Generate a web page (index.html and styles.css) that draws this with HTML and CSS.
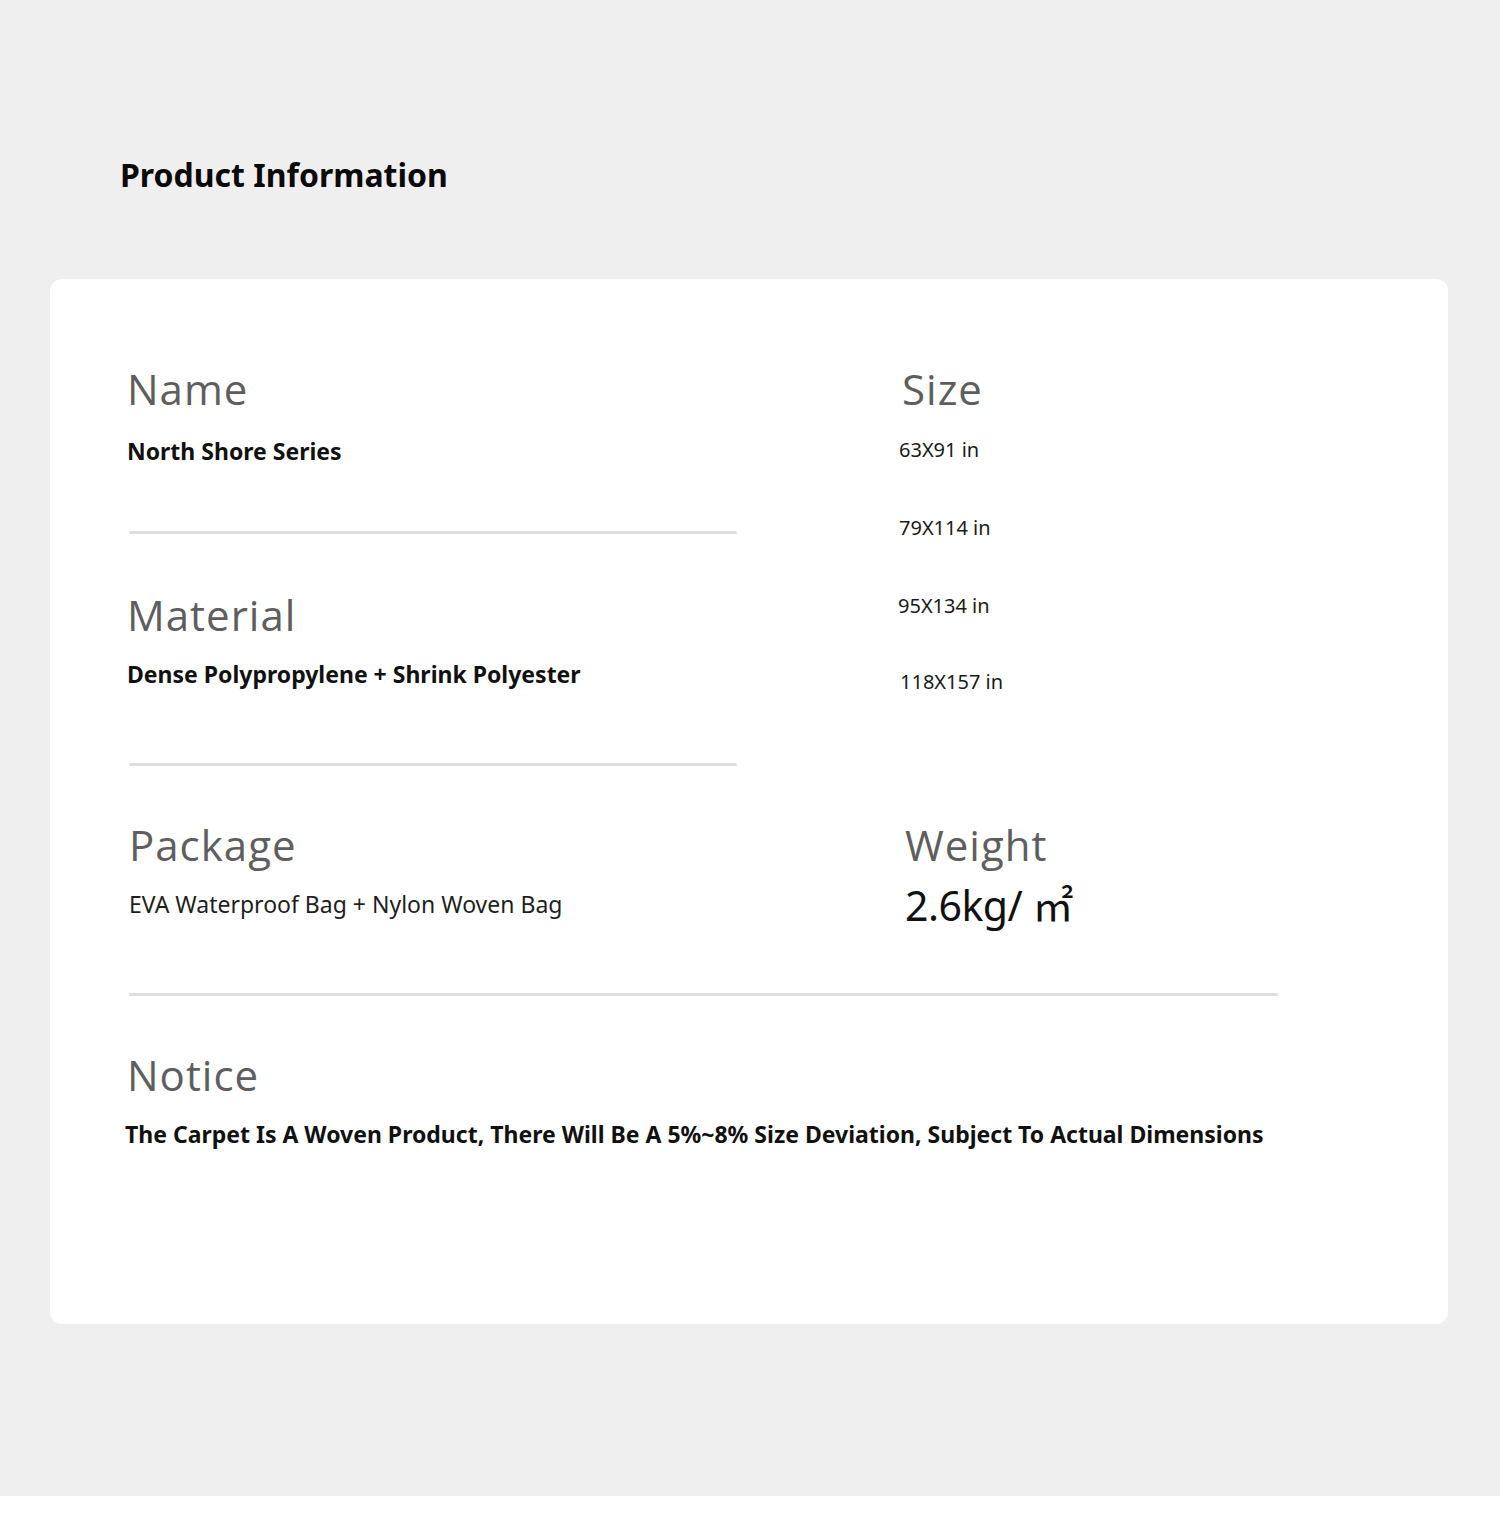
FILE: index.html
```html
<!DOCTYPE html>
<html lang="en">
<head>
<meta charset="utf-8">
<title>Product Information</title>
<link rel="stylesheet" href="styles.css">
</head>
<body>
<div class="page">
  <h1 class="title">Product Information</h1>
  <section class="card">
    <div class="grid">
      <div class="col-left">
        <div class="field">
          <div class="label">Name</div>
          <div class="value bold">North Shore Series</div>
        </div>
        <div class="divider d1"></div>
        <div class="field f-material">
          <div class="label">Material</div>
          <div class="value bold v-material">Dense Polypropylene + Shrink Polyester</div>
        </div>
        <div class="divider d2"></div>
      </div>
      <div class="col-right">
        <div class="label label-size">Size</div>
        <ul class="sizes">
          <li>63X91 in</li>
          <li>79X114 in</li>
          <li class="s3">95X134 in</li>
          <li class="s4">118X157 in</li>
        </ul>
      </div>
      <div class="field f-package">
        <div class="label label-package">Package</div>
        <div class="value regular v-package">EVA Waterproof Bag + Nylon Woven Bag</div>
      </div>
      <div class="field f-weight">
        <div class="label">Weight</div>
        <div class="weight">2.6kg/ ㎡</div>
      </div>
    </div>
    <div class="divider d3"></div>
    <div class="field f-notice">
      <div class="label">Notice</div>
      <div class="value bold v-notice">The Carpet Is A Woven Product, There Will Be A 5%~8% Size Deviation, Subject To Actual Dimensions</div>
    </div>
  </section>
</div>
<div class="bottom-band"></div>
</body>
</html>
```

FILE: styles.css
```css
* { box-sizing: border-box; }
html, body { margin: 0; padding: 0; }
body {
  background: #efefef;
  font-family: "Noto Sans", "Open Sans", "Noto Sans CJK SC", sans-serif;
  color: #111;
}
.page {
  height: 1496px;
  padding: 159px 52px 0 50px;
}
.title {
  margin: 0 0 0 70px;
  font-size: 32px;
  line-height: 32px;
  font-weight: 700;
  color: #0a0a0a;
  height: 120px;
}
.card {
  background: #fff;
  border-radius: 12px;
  height: 1045px;
  padding: 89px 0 0 77px;
}
.grid {
  display: grid;
  grid-template-columns: 608px 1fr;
  column-gap: 164px;
}
.label {
  font-family: "Open Sans", "Noto Sans", sans-serif;
  font-size: 42px;
  line-height: 42px;
  color: #5e5e5e;
  font-weight: 400;
  letter-spacing: 1px;
}
.label-size { padding-left: 3px; }
.value {
  font-size: 23px;
  line-height: 23px;
  margin-top: 30px;
  color: #111;
}
.value.bold { font-weight: 700; }
.value.regular { font-weight: 400; color: #1e1e1e; }
.v-material { margin-top: 27px; }
.divider {
  height: 3px;
  background: #dedede;
  border-radius: 2px;
}
.d1 { margin: 68px 0 0 2px; width: 608px; }
.f-material { margin-top: 60px; }
.d2 { margin: 77px 0 0 2px; width: 608px; }
.sizes {
  list-style: none;
  margin: 30px 0 0 0;
  padding: 0;
  font-size: 20px;
  line-height: 20px;
  color: #1a1a1a;
  display: flex;
  flex-direction: column;
  gap: 58px;
}
.sizes .s3 { margin-left: -1px; }
.sizes .s4 { margin-left: 1px; margin-top: -2px; }
.f-package { margin-top: 58px; padding-left: 2px; }
.v-package { margin-top: 27px; }
.f-weight { margin-top: 58px; padding-left: 6px; }
.weight {
  margin-top: 18px;
  font-size: 41px;
  line-height: 42px;
  height: 42px;
  color: #111;
  letter-spacing: -0.5px;
}
.d3 { margin: 67px 0 0 2px; width: 1149px; }
.f-notice { margin-top: 58px; }
.v-notice { margin-top: 27px; margin-left: -2px; }
.bottom-band {
  height: 30px;
  background: #fff;
}
```
